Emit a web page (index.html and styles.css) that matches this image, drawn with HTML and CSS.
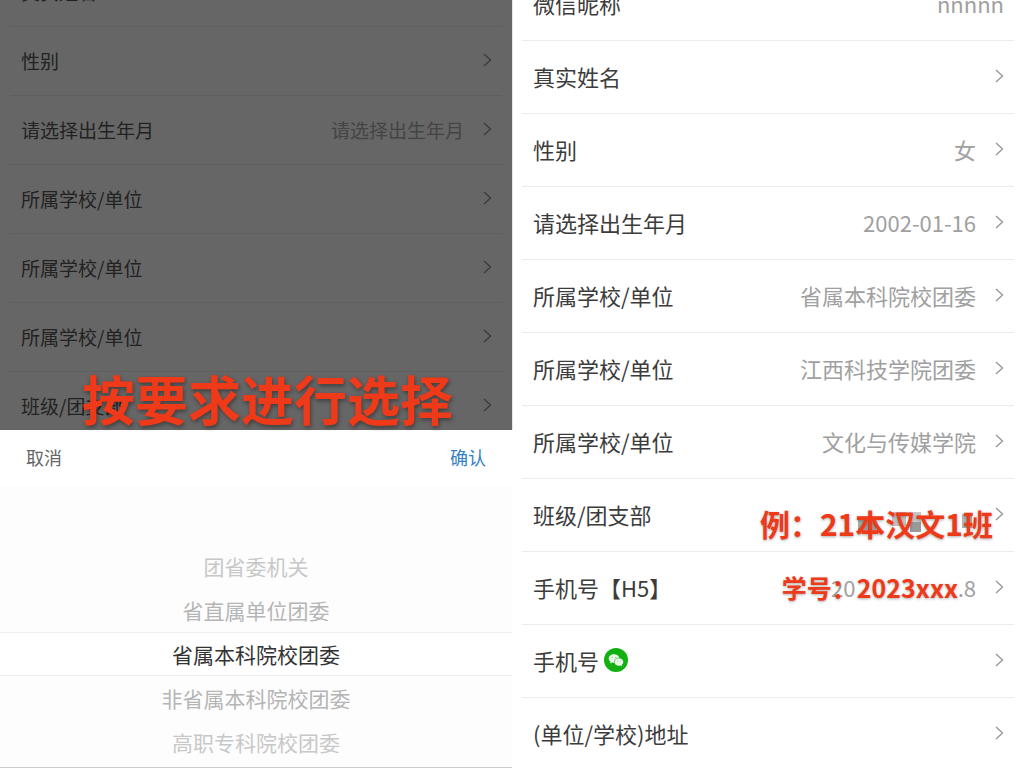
FILE: index.html
```html
<!DOCTYPE html>
<html lang="zh-CN">
<head>
<meta charset="utf-8">
<title>个人信息</title>
<link rel="stylesheet" href="styles.css">
</head>
<body>
<svg class="defs" aria-hidden="true">
  <symbol id="chevron" viewBox="0 0 9 14"><path d="M1 1l6.500 6L1 13" fill="none" stroke="currentColor" stroke-width="1.400"/></symbol>
</svg>
<main class="screens">
  <section class="phone phone-picker">
    <div class="dimmed">
      <ul class="list">
        <li><button class="row"><span class="label">真实姓名</span><svg class="chevron"><use href="#chevron"/></svg></button></li>
        <li><button class="row"><span class="label">性别</span><svg class="chevron"><use href="#chevron"/></svg></button></li>
        <li><button class="row"><span class="label">请选择出生年月</span><span class="value">请选择出生年月</span><svg class="chevron"><use href="#chevron"/></svg></button></li>
        <li><button class="row"><span class="label">所属学校/单位</span><svg class="chevron"><use href="#chevron"/></svg></button></li>
        <li><button class="row"><span class="label">所属学校/单位</span><svg class="chevron"><use href="#chevron"/></svg></button></li>
        <li><button class="row"><span class="label">所属学校/单位</span><svg class="chevron"><use href="#chevron"/></svg></button></li>
        <li><button class="row"><span class="label">班级/团支部</span><svg class="chevron"><use href="#chevron"/></svg></button></li>
      </ul>
    </div>
    <div class="sheet">
      <div class="toolbar">
        <button class="cancel">取消</button>
        <button class="confirm">确认</button>
      </div>
      <ul class="wheel" role="listbox" aria-label="所属学校/单位">
        <li class="option far" role="option">团省委机关</li>
        <li class="option" role="option">省直属单位团委</li>
        <li class="option selected" role="option" aria-selected="true">省属本科院校团委</li>
        <li class="option" role="option">非省属本科院校团委</li>
        <li class="option far" role="option">高职专科院校团委</li>
      </ul>
    </div>
    <p class="note note-choose">按要求进行选择</p>
  </section>

  <section class="phone phone-form">
    <ul class="list">
      <li><button class="row"><span class="label">微信昵称</span><span class="value last">nnnnn</span></button></li>
      <li><button class="row"><span class="label">真实姓名</span><svg class="chevron"><use href="#chevron"/></svg></button></li>
      <li><button class="row"><span class="label">性别</span><span class="value">女</span><svg class="chevron"><use href="#chevron"/></svg></button></li>
      <li><button class="row"><span class="label">请选择出生年月</span><span class="value">2002-01-16</span><svg class="chevron"><use href="#chevron"/></svg></button></li>
      <li><button class="row"><span class="label">所属学校/单位</span><span class="value">省属本科院校团委</span><svg class="chevron"><use href="#chevron"/></svg></button></li>
      <li><button class="row"><span class="label">所属学校/单位</span><span class="value">江西科技学院团委</span><svg class="chevron"><use href="#chevron"/></svg></button></li>
      <li><button class="row"><span class="label">所属学校/单位</span><span class="value">文化与传媒学院</span><svg class="chevron"><use href="#chevron"/></svg></button></li>
      <li class="noted">
        <button class="row"><span class="label">班级/团支部</span>
          <svg class="value mosaic" viewBox="0 0 122 40"><path d="M4 25h18v11H4z" fill="#aaa"/><path d="M38 18h14v14H38z" fill="#c4c4c4"/><path d="M56 18h11v10H56z" fill="#c8c8c8"/><path d="M56 28h11v10H56z" fill="#999"/><path d="M108 20h10v14h-10z" fill="#b5b5b5"/></svg>
          <svg class="chevron"><use href="#chevron"/></svg></button>
        <p class="note note-class">例：21本汉文1班</p>
      </li>
      <li class="noted">
        <button class="row"><span class="label">手机号【H5】</span><span class="value number"><span>20</span><span>.8</span></span><svg class="chevron"><use href="#chevron"/></svg></button>
        <p class="note note-id">学号：2023xxx</p>
      </li>
      <li><button class="row"><span class="label">手机号</span>
        <svg class="wechat" viewBox="0 0 24 24" role="img" aria-label="微信"><circle cx="12" cy="12" r="12" fill="#13b012"/><path d="M10 6.300c-3 0-5.300 1.800-5.300 4.200 0 1.300.7 2.400 1.800 3.200l-.5 1.700 2-.9c.7.200 1.300.3 2 .3-.4-3 2.100-5.200 5.300-5.100C14.800 7.700 12.600 6.300 10 6.300z" fill="#e9f8e9"/><path d="M14.900 10.300c-2.500 0-4.500 1.600-4.500 3.700s2 3.700 4.500 3.700c.5 0 1-.1 1.500-.2l1.600.8-.4-1.400c1-.7 1.700-1.700 1.700-2.900 0-2.100-2-3.700-4.400-3.700z" fill="#e9f8e9"/><g fill="#7fd67f"><circle cx="8.300" cy="9.400" r=".6"/><circle cx="11.700" cy="9.400" r=".6"/><circle cx="13.500" cy="13" r=".5"/><circle cx="16.400" cy="13" r=".5"/></g></svg>
        <svg class="chevron"><use href="#chevron"/></svg></button></li>
      <li><button class="row"><span class="label">(单位/学校)地址</span><svg class="chevron"><use href="#chevron"/></svg></button></li>
    </ul>
  </section>
</main>
</body>
</html>
```
FILE: styles.css
```css
* { box-sizing: border-box; }
body {
  margin: 0;
  background: #fff;
  color: #3c3c3c;
  font-family: "Noto Sans CJK SC", "Noto Sans", sans-serif;
}
ul, p { margin: 0; padding: 0; list-style: none; }
button {
  border: 0;
  padding: 0;
  background: none;
  color: inherit;
  font: inherit;
  text-align: left;
}
.defs { display: none; }
.screens {
  display: grid;
  grid-template-columns: 1fr 1fr;
  height: 100vh;
  overflow: hidden;
}
.phone {
  position: relative;
  display: flex;
  flex-direction: column;
  min-height: 0;
  overflow: hidden;
}
.list { padding: 0 10px; }
.list li { border-bottom: 1px solid #ececec; }
.row {
  display: flex;
  align-items: center;
  width: 100%;
  padding: 0 10px 2px 11px;
  white-space: nowrap;
}
.value { margin-left: auto; color: #a0a0a0; }
.chevron {
  flex: none;
  width: 9px;
  height: 14px;
  margin-left: auto;
  color: #999;
}
.value + .chevron { margin-left: 19px; }

.dimmed {
  flex: 1;
  min-height: 0;
  overflow: hidden;
  background: #666;
  color: #222;
  font-size: 19px;
}
.dimmed .list { margin-top: -42px; }
.dimmed li { border-color: #5f5f5f; }
.dimmed .row { height: 68px; }
.dimmed .value { color: #444; }
.dimmed .chevron { color: #3c3c3c; }

.sheet {
  flex: none;
  background: #fff;
  border-bottom: 1px solid #ccc;
}
.toolbar {
  display: flex;
  align-items: center;
  justify-content: space-between;
  height: 56px;
  padding: 0 26px 2px;
  font-size: 18px;
}
.cancel { color: #666; }
.confirm { color: #3580c6; }
.wheel {
  padding: 58px 0 3px;
  background: #fdfdfd;
  font-size: 21px;
  line-height: 44px;
  text-align: center;
}
.option { color: #b5b5b5; }
.option.far { color: #c8c8c8; }
.option.selected {
  height: 44px;
  border-top: 1px solid #eee;
  border-bottom: 1px solid #eee;
  background: #fff;
  color: #333;
  line-height: 42px;
}

.phone-form {
  background: linear-gradient(#e4e4e4, #e4e4e4) no-repeat 0 0 / 1px 56%;
  font-size: 22px;
}
.phone-form .list { margin-top: -32px; }
.phone-form .row { height: 72px; }
.noted { position: relative; }
.mosaic { width: 122px; height: 40px; }
.number {
  display: flex;
  justify-content: space-between;
  width: 145px;
}
.wechat { width: 24px; height: 24px; margin-left: 5px; }

.note {
  position: absolute;
  color: #ee3a18;
  font-weight: 700;
  line-height: 1;
  white-space: nowrap;
}
.note-choose {
  left: 82px;
  bottom: 343px;
  font-size: 53px;
  text-shadow: 1px 2px 4px #0006;
}
.note-class {
  right: 21px;
  top: 29px;
  font-size: 30px;
  text-shadow: 0 1px 3px #0005;
}
.note-id {
  right: 56px;
  top: 23px;
  font-size: 25px;
  text-shadow: 0 1px 3px #0005;
}
```
